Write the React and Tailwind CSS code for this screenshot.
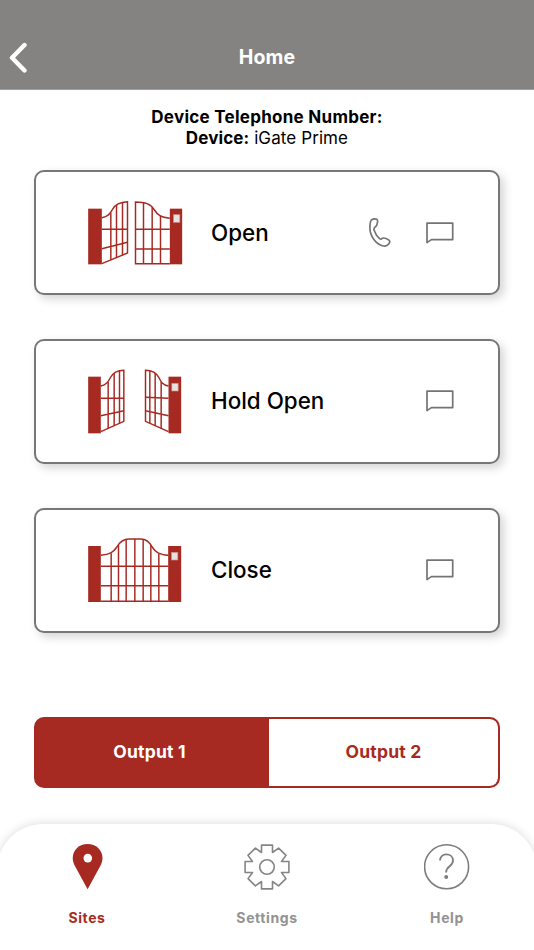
import React, { useState } from "react";

const PILLAR = "#a62a22";

const GateFrame = ({ viewBox, children }) => (
  <svg
    viewBox={viewBox}
    width="96"
    height="66"
    fill="none"
    stroke={PILLAR}
    strokeWidth="4.4"
    className="shrink-0"
  >
    {children}
  </svg>
);

const Keypad = ({ x, y }) => (
  <rect x={x} y={y} width="19" height="23" fill="#e6e2e2" stroke="#cf8a84" strokeWidth="2" />
);

const GateOpenIcon = () => (
  <GateFrame viewBox="24.5 30 288 198">
    <rect x="25" y="56" width="41" height="167" fill={PILLAR} stroke="none" />
    <rect x="270" y="56" width="37" height="167" fill={PILLAR} stroke="none" />
    <Keypad x={281} y={74} />
    <path d="M66 83C84 80 90 72 98 58C107 41 122 36 143 35V189L66 221" />
    <path d="M93 68V210M110 44V203M128 37V196M66 118H143M66 176L143 157" />
    <path d="M270 85C243 82 233 75 224 60C212 41 196 36 167 36V221H270" />
    <path d="M191 37V221M217 50V221M242 78V221M167 118H270M167 177H270" />
  </GateFrame>
);

const GateHoldIcon = () => (
  <GateFrame viewBox="24.5 24 288 198">
    <rect x="25" y="50" width="38" height="170" fill={PILLAR} stroke="none" />
    <rect x="266" y="50" width="38" height="170" fill={PILLAR} stroke="none" />
    <Keypad x={276} y={70} />
    <path d="M63 78C80 75 86 65 91 54C100 37 113 31 132 31V184L63 215" />
    <path d="M85 66V205M103 39V197M119 33V190M63 115H132M63 167L132 152" />
    <path d="M266 78C248 75 243 65 238 54C229 37 216 31 197 31V184L266 215" />
    <path d="M244 66V205M226 39V197M210 33V190M197 112L266 115M197 152L266 167" />
  </GateFrame>
);

const GateCloseIcon = () => (
  <GateFrame viewBox="24.5 21 288 198">
    <rect x="25" y="48" width="38" height="168" fill={PILLAR} stroke="none" />
    <rect x="265" y="48" width="39" height="168" fill={PILLAR} stroke="none" />
    <Keypad x={275} y={67} />
    <path d="M63 76C89 73 101 67 111 51C121 34 133 27 147 27H183C197 27 208 34 217 51C227 67 238 73 265 76M63 214H265" />
    <path d="M94 70V214M116 45V214M139 29V214M165 27V214M190 28V214M213 44V214M237 71V214M63 109H265M63 167H265" />
  </GateFrame>
);

const PhoneIcon = () => (
  <svg
    viewBox="0 0 22 30"
    width="22"
    height="30"
    fill="none"
    stroke="#747474"
    strokeWidth="1.7"
    strokeLinejoin="round"
  >
    <path d="M2.2 2.2C3.5 1 6 .6 7.7 1.3C8.8 1.8 8.7 2.9 8.5 4.3C8.2 6.4 7.8 7.8 6.4 8.7C4.7 9.8 4.6 10.8 5.2 12.6C6.3 15.7 8.2 18.7 10.6 20.7C11.8 21.7 12.4 21 13.3 20.3C15 19.5 18 20.8 20 22.1C21.2 23 20.8 24.6 19.7 26C18.3 27.9 15.8 28.4 13.4 27.7C6.4 25.6 .9 17.9 .9 9.8C.9 6.7 .9 3.7 2.2 2.2Z" />
  </svg>
);

const MessageIcon = () => (
  <svg
    viewBox="0 0 28 22"
    width="28"
    height="22"
    fill="none"
    stroke="#747474"
    strokeWidth="1.7"
    strokeLinejoin="round"
  >
    <path d="M1 1.2H26.7V17.6H5.4L1 20.6Z" />
  </svg>
);

const SitesIcon = () => (
  <svg viewBox="0 0 46 46" width="46" height="46">
    <path
      d="M23.6 .1C15.2 .1 8.7 6.3 8.7 14.1C8.7 17.4 9.8 20 11.2 22.6L23.6 45.2L36 22.6C37.4 20 38.5 17.4 38.5 14.1C38.5 6.3 32 .1 23.6 .1Z"
      fill="#a62a22"
    />
    <circle cx="23.8" cy="14.1" r="4.3" fill="#fff" />
  </svg>
);

const SettingsIcon = () => (
  <svg
    viewBox="0 0 46 46"
    width="46"
    height="46"
    fill="none"
    stroke="#858585"
    strokeWidth="1.6"
    strokeLinejoin="round"
  >
    <path d="M17.5 1.1H28.5V8.5L34.6 4.1L42 11.4L37.5 17.5H44.9V28.5H37.5L42 34.6L34.6 41.9L28.5 37.5V44.9H17.5V37.5L11.4 41.9L4 34.6L8.5 28.5H1.1V17.5H8.5L4 11.4L11.4 4.1L17.5 8.5Z" />
    <circle cx="23" cy="23" r="7.3" />
  </svg>
);

const HelpIcon = () => (
  <svg
    viewBox="0 0 46 46"
    width="46"
    height="46"
    fill="none"
    stroke="#7d7d7d"
    strokeWidth="1.6"
  >
    <circle cx="22.6" cy="22.8" r="22" />
    <path
      d="M16 16.6C16 12.8 18.6 10.4 22.4 10.4C26.2 10.4 29 12.8 29 16.5C29 22.8 22.1 21.6 22.1 28.4"
      strokeWidth="1.8"
    />
    <circle cx="22.2" cy="33.1" r="2" fill="#7d7d7d" stroke="none" />
  </svg>
);

const actions = [
  { label: "Open", icon: GateOpenIcon, call: true },
  { label: "Hold Open", icon: GateHoldIcon },
  { label: "Close", icon: GateCloseIcon },
];

const outputs = [
  { name: "Output 1", className: "pr-[6px]" },
  { name: "Output 2", className: "" },
];

const tabs = [
  { label: "Sites", icon: SitesIcon },
  { label: "Settings", icon: SettingsIcon },
  { label: "Help", icon: HelpIcon },
];

const ActionCard = ({ label, icon: Icon, call }) => (
  <div className="flex items-center h-[125px] pl-[52px] pr-[44px] rounded-[10px] border-2 border-[#777] bg-white shadow-[4px_4px_10px_rgba(0,0,0,0.17)]">
    <Icon />
    <span className="ml-[27px] flex-1 text-[22.4px] font-medium text-black">
      {label}
    </span>
    <div className="flex items-center gap-[35px]">
      {call && (
        <button aria-label="Call">
          <PhoneIcon />
        </button>
      )}
      <button aria-label="Message">
        <MessageIcon />
      </button>
    </div>
  </div>
);

const App = () => {
  const [output, setOutput] = useState("Output 1");
  const [tab, setTab] = useState("Sites");

  return (
    <div className="flex flex-col w-[534px] h-[950px] overflow-hidden bg-white font-['Inter','Liberation_Sans',sans-serif]">
      <header className="grid grid-cols-3 items-center h-[90px] pt-[26px] shrink-0 bg-[#848381] border-b border-[#a09f9e]">
        <button aria-label="Back" className="pl-[9px]">
          <svg
            viewBox="0 0 20 32"
            width="20"
            height="32"
            fill="none"
            stroke="#fff"
            strokeWidth="4.4"
            strokeLinecap="round"
            strokeLinejoin="round"
          >
            <path d="M15.5 3L3 15.7L15.5 28.5" />
          </svg>
        </button>
        <h1 className="pt-px text-center text-[19.5px] font-bold tracking-[0.2px] text-white">
          Home
        </h1>
      </header>

      <div className="mt-[17px] text-center text-[17px] leading-[21px] text-black">
        <p className="font-bold tracking-[0.27px]">Device Telephone Number:</p>
        <p className="tracking-[0.1px]">
          <span className="font-bold">Device:</span> iGate Prime
        </p>
      </div>

      <div className="flex flex-col gap-[43.8px] mt-[21px] px-[34px]">
        {actions.map((action) => (
          <ActionCard key={action.label} {...action} />
        ))}
      </div>

      <div className="grid grid-cols-[233px_1fr] h-[71px] mt-[84px] mx-[34px] shrink-0 rounded-[10px] border-2 border-[#a62a22] bg-[#a62a22] overflow-hidden">
        {outputs.map(({ name, className }) => (
          <button
            key={name}
            onClick={() => setOutput(name)}
            className={`text-[17.5px] font-bold tracking-[0.2px] ${className} ${
              output === name
                ? "bg-[#a62a22] text-white"
                : "bg-white text-[#a62a22] rounded-r-lg"
            }`}
          >
            {name}
          </button>
        ))}
      </div>

      <nav className="grid grid-cols-[180px_1fr_180px] flex-1 mt-[36px] -mx-[3px] pt-[20px] rounded-t-[46px] bg-white shadow-[0_-1px_10px_rgba(0,0,0,0.13)]">
        {tabs.map(({ label, icon: Icon }) => (
          <button
            key={label}
            onClick={() => setTab(label)}
            className={`flex flex-col items-center text-[14px] leading-[20px] font-bold tracking-[0.6px] ${
              tab === label ? "text-[#a62a22]" : "text-[#929292]"
            }`}
          >
            <Icon />
            <span className="mt-[18px]">{label}</span>
          </button>
        ))}
      </nav>
    </div>
  );
};

export default App;
